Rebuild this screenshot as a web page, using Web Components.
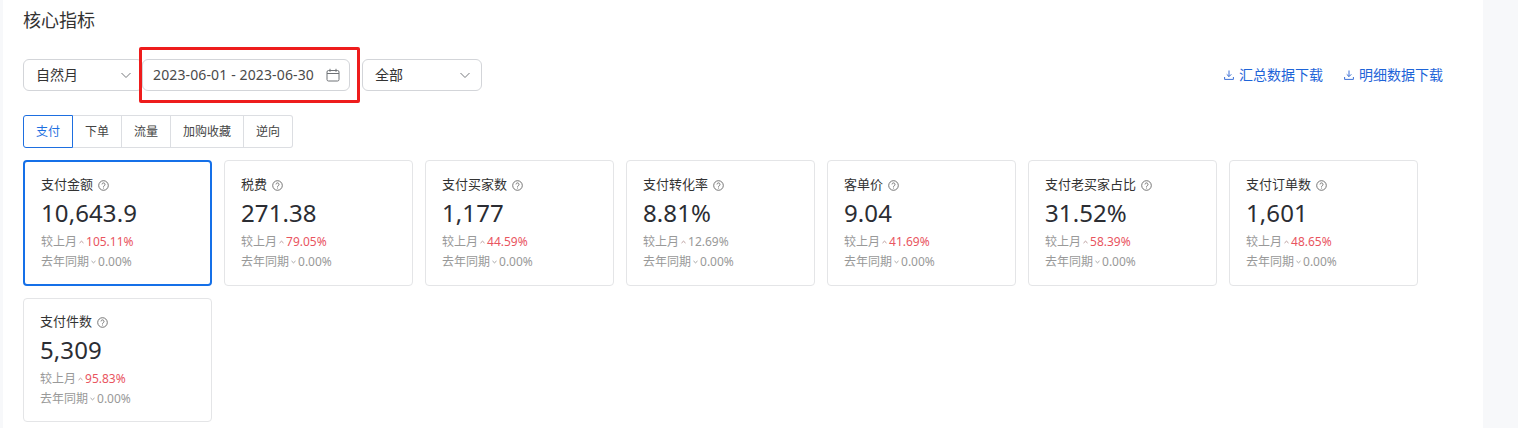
<!DOCTYPE html>
<html lang="zh">
<head>
<meta charset="utf-8">
<title>核心指标</title>
<style>
  html, body { margin: 0; height: 428px; overflow: hidden; background: #f7f8fa; }
  body { font-family: "Noto Sans", "Noto Sans CJK SC", sans-serif; color: #333; }
</style>
</head>
<body>
<core-metrics></core-metrics>

<script>
const chevron = `<svg width="12" height="12" viewBox="0 0 12 12" fill="none" stroke="#77797d" stroke-width="1"><path d="M1.5 4l4.5 4.5L10.5 4"/></svg>`;
const FONT = `"Noto Sans", "Noto Sans CJK SC", sans-serif`;

class UiSelect extends HTMLElement {
  constructor() {
    super();
    const shadow = this.attachShadow({mode: 'open'});
    shadow.innerHTML = `
      <style>
        :host { display: flex; align-items: center; justify-content: space-between; box-sizing: border-box;
          height: 32px; padding: 0 10px 0 12px; border: 1px solid #d3d5d9; border-radius: 6px; background: #fff;
          font: 14px/1 ${FONT}; color: #333; }
      </style>
      <slot></slot>${chevron}`;
  }
}
customElements.define('ui-select', UiSelect);

class UiDateRange extends HTMLElement {
  constructor() {
    super();
    const shadow = this.attachShadow({mode: 'open'});
    shadow.innerHTML = `
      <style>
        :host { display: flex; align-items: center; justify-content: space-between; box-sizing: border-box;
          height: 32px; padding: 0 9px 0 10px; border: 1px solid #d3d5d9; border-radius: 6px; background: #fff;
          font: 14px/1 ${FONT}; letter-spacing: .13px; color: #4a4a4a; white-space: nowrap; }
      </style>
      <slot></slot>
      <svg width="14" height="14" viewBox="0 0 14 14" fill="none" stroke="#6f7276" stroke-width="1">
        <rect x="1" y="2.5" width="12" height="10.5" rx="1.5"/><path d="M1 5.5h12M4 .8v3M10 .8v3"/>
      </svg>`;
  }
}
customElements.define('ui-date-range', UiDateRange);

class UiDownload extends HTMLElement {
  constructor() {
    super();
    const shadow = this.attachShadow({mode: 'open'});
    shadow.innerHTML = `
      <style>
        :host { display: inline-flex; align-items: center; gap: 5px; font: 14px/1 ${FONT}; color: #1e64d8; white-space: nowrap; }
      </style>
      <svg width="10" height="10" viewBox="0 0 10 10" fill="none" stroke="#3d70d6" stroke-width="1"><path d="M5 .5v6M2.7 4.3L5 6.6l2.3-2.3M.6 7v2.4h8.8V7"/></svg>
      <slot></slot>`;
  }
}
customElements.define('ui-download', UiDownload);

class UiTabs extends HTMLElement {
  constructor() {
    super();
    const shadow = this.attachShadow({mode: 'open'});
    shadow.innerHTML = `
      <style>
        :host { display: inline-flex; height: 33px; }
        .tab { display: flex; align-items: center; justify-content: center; box-sizing: border-box;
          border: 1px solid #dcdee2; border-left-width: 0; background: #fff; font: 12px/1 ${FONT}; color: #444; }
        .tab:first-of-type { border-radius: 3px 0 0 3px; border: 1px solid #1e6fe0; color: #1e6fe0; }
        .tab:last-of-type { border-radius: 0 3px 3px 0; }
      </style>
      <div class="tab" style="width:50px">支付</div>
      <div class="tab" style="width:49px">下单</div>
      <div class="tab" style="width:49px">流量</div>
      <div class="tab" style="width:73px">加购收藏</div>
      <div class="tab" style="width:49px">逆向</div>`;
  }
}
customElements.define('ui-tabs', UiTabs);

class MetricCard extends HTMLElement {
  constructor() {
    super();
    const shadow = this.attachShadow({mode: 'open'});
    const a = n => this.getAttribute(n);
    const tick = up => up
      ? `<svg class="tick" width="5" height="4" viewBox="0 0 5 4" fill="none" stroke="#b08f8f" stroke-width=".9"><path d="M.5 3L2.5 1.2 4.5 3"/></svg>`
      : `<svg class="tick" width="5" height="4" viewBox="0 0 5 4" fill="none" stroke="#999" stroke-width=".9"><path d="M.5 1l2 1.8L4.5 1"/></svg>`;
    const flat = this.hasAttribute('flat');
    shadow.innerHTML = `
      <style>
        :host { display: flex; flex-direction: column; box-sizing: border-box; width: 189px; height: 126px;
          padding: 15px 16px 0; border: 1px solid #e4e5e7; border-radius: 4px; background: #fff; font-family: ${FONT}; }
        :host([active]) { border: 2px solid #1570e8; padding: 14px 16px 0; }
        :host([compact]) { height: 124px; padding-top: 14px; }
        .name { display: flex; align-items: center; gap: 5px; height: 16px; font-size: 13px; line-height: 16px; color: #333; }
        .value { margin-top: 4px; font-size: 24px; line-height: 33px; letter-spacing: .1px; color: #2b2d33; }
        .row { display: flex; align-items: center; height: 20px; font-size: 12px; color: #999; white-space: nowrap; }
        .row.first { margin-top: 2px; }
        .tick { margin: 1px 2px 0; flex: none; }
        .up { color: #e9555f; }
      </style>
      <div class="name">${a('name')}
        <svg style="margin-top:2px" width="11" height="11" viewBox="0 0 11 11" fill="none" stroke="#666" stroke-width=".9">
          <circle cx="5.5" cy="5.5" r="4.8"/><path d="M4 4.4a1.5 1.5 0 1 1 2.3 1.3c-.5.3-.8.6-.8 1.1"/><path d="M5.5 7.6v.9"/>
        </svg>
      </div>
      <div class="value">${a('value')}</div>
      <div class="row first">较上月${tick(true)}<span class="${flat ? '' : 'up'}">${a('mom')}</span></div>
      <div class="row">去年同期${tick(false)}<span>0.00%</span></div>`;
  }
}
customElements.define('metric-card', MetricCard);

class CoreMetrics extends HTMLElement {
  constructor() {
    super();
    const shadow = this.attachShadow({mode: 'open'});
    const metrics = [
      ['支付金额', '10,643.9', '105.11%'], ['税费', '271.38', '79.05%'], ['支付买家数', '1,177', '44.59%'],
      ['支付转化率', '8.81%', '12.69%', true], ['客单价', '9.04', '41.69%'], ['支付老买家占比', '31.52%', '58.39%'],
      ['支付订单数', '1,601', '48.65%'], ['支付件数', '5,309', '95.83%']
    ];
    const cards = metrics.map((m, i) =>
      `<metric-card name="${m[0]}" value="${m[1]}" mom="${m[2]}"${m[3] ? ' flat' : ''}${i === 0 ? ' active' : ''}${i === 7 ? ' compact' : ''}></metric-card>`
    ).join('');
    shadow.innerHTML = `
      <style>
        :host { display: block; box-sizing: border-box; position: relative; width: 1480px; height: 428px; margin-left: 3px;
          padding: 10px 20px 0; background: #fff; font-family: ${FONT}; }
        h2 { margin: 0; font-size: 18px; line-height: 20px; font-weight: 400; color: #333; }
        .filters { display: flex; align-items: center; margin-top: 29px; }
        .filters ui-date-range { position: relative; }
        .downloads { display: flex; gap: 21px; margin-left: auto; margin-right: 20px; }
        .tabs { margin-top: 24px; display: flex; }
        .grid { display: flex; flex-wrap: wrap; gap: 12px; margin-top: 12px; }
        /* red annotation drawn over the screenshot */
        .mark { position: absolute; left: 136px; top: 47px; width: 221px; height: 56px; box-sizing: border-box;
          border: 3px solid #ee1c1c; border-radius: 2px; pointer-events: none; }
      </style>
      <h2>核心指标</h2>
      <div class="filters">
        <ui-select style="width:120px">自然月</ui-select>
        <ui-date-range style="width:208px;margin-left:-1px">2023-06-01 - 2023-06-30</ui-date-range>
        <ui-select style="width:120px;margin-left:12px">全部</ui-select>
        <div class="downloads"><ui-download>汇总数据下载</ui-download><ui-download>明细数据下载</ui-download></div>
      </div>
      <div class="tabs"><ui-tabs></ui-tabs></div>
      <div class="grid">${cards}</div>
      <div class="mark"></div>`;
  }
}
customElements.define('core-metrics', CoreMetrics);
</script>
</body>
</html>
